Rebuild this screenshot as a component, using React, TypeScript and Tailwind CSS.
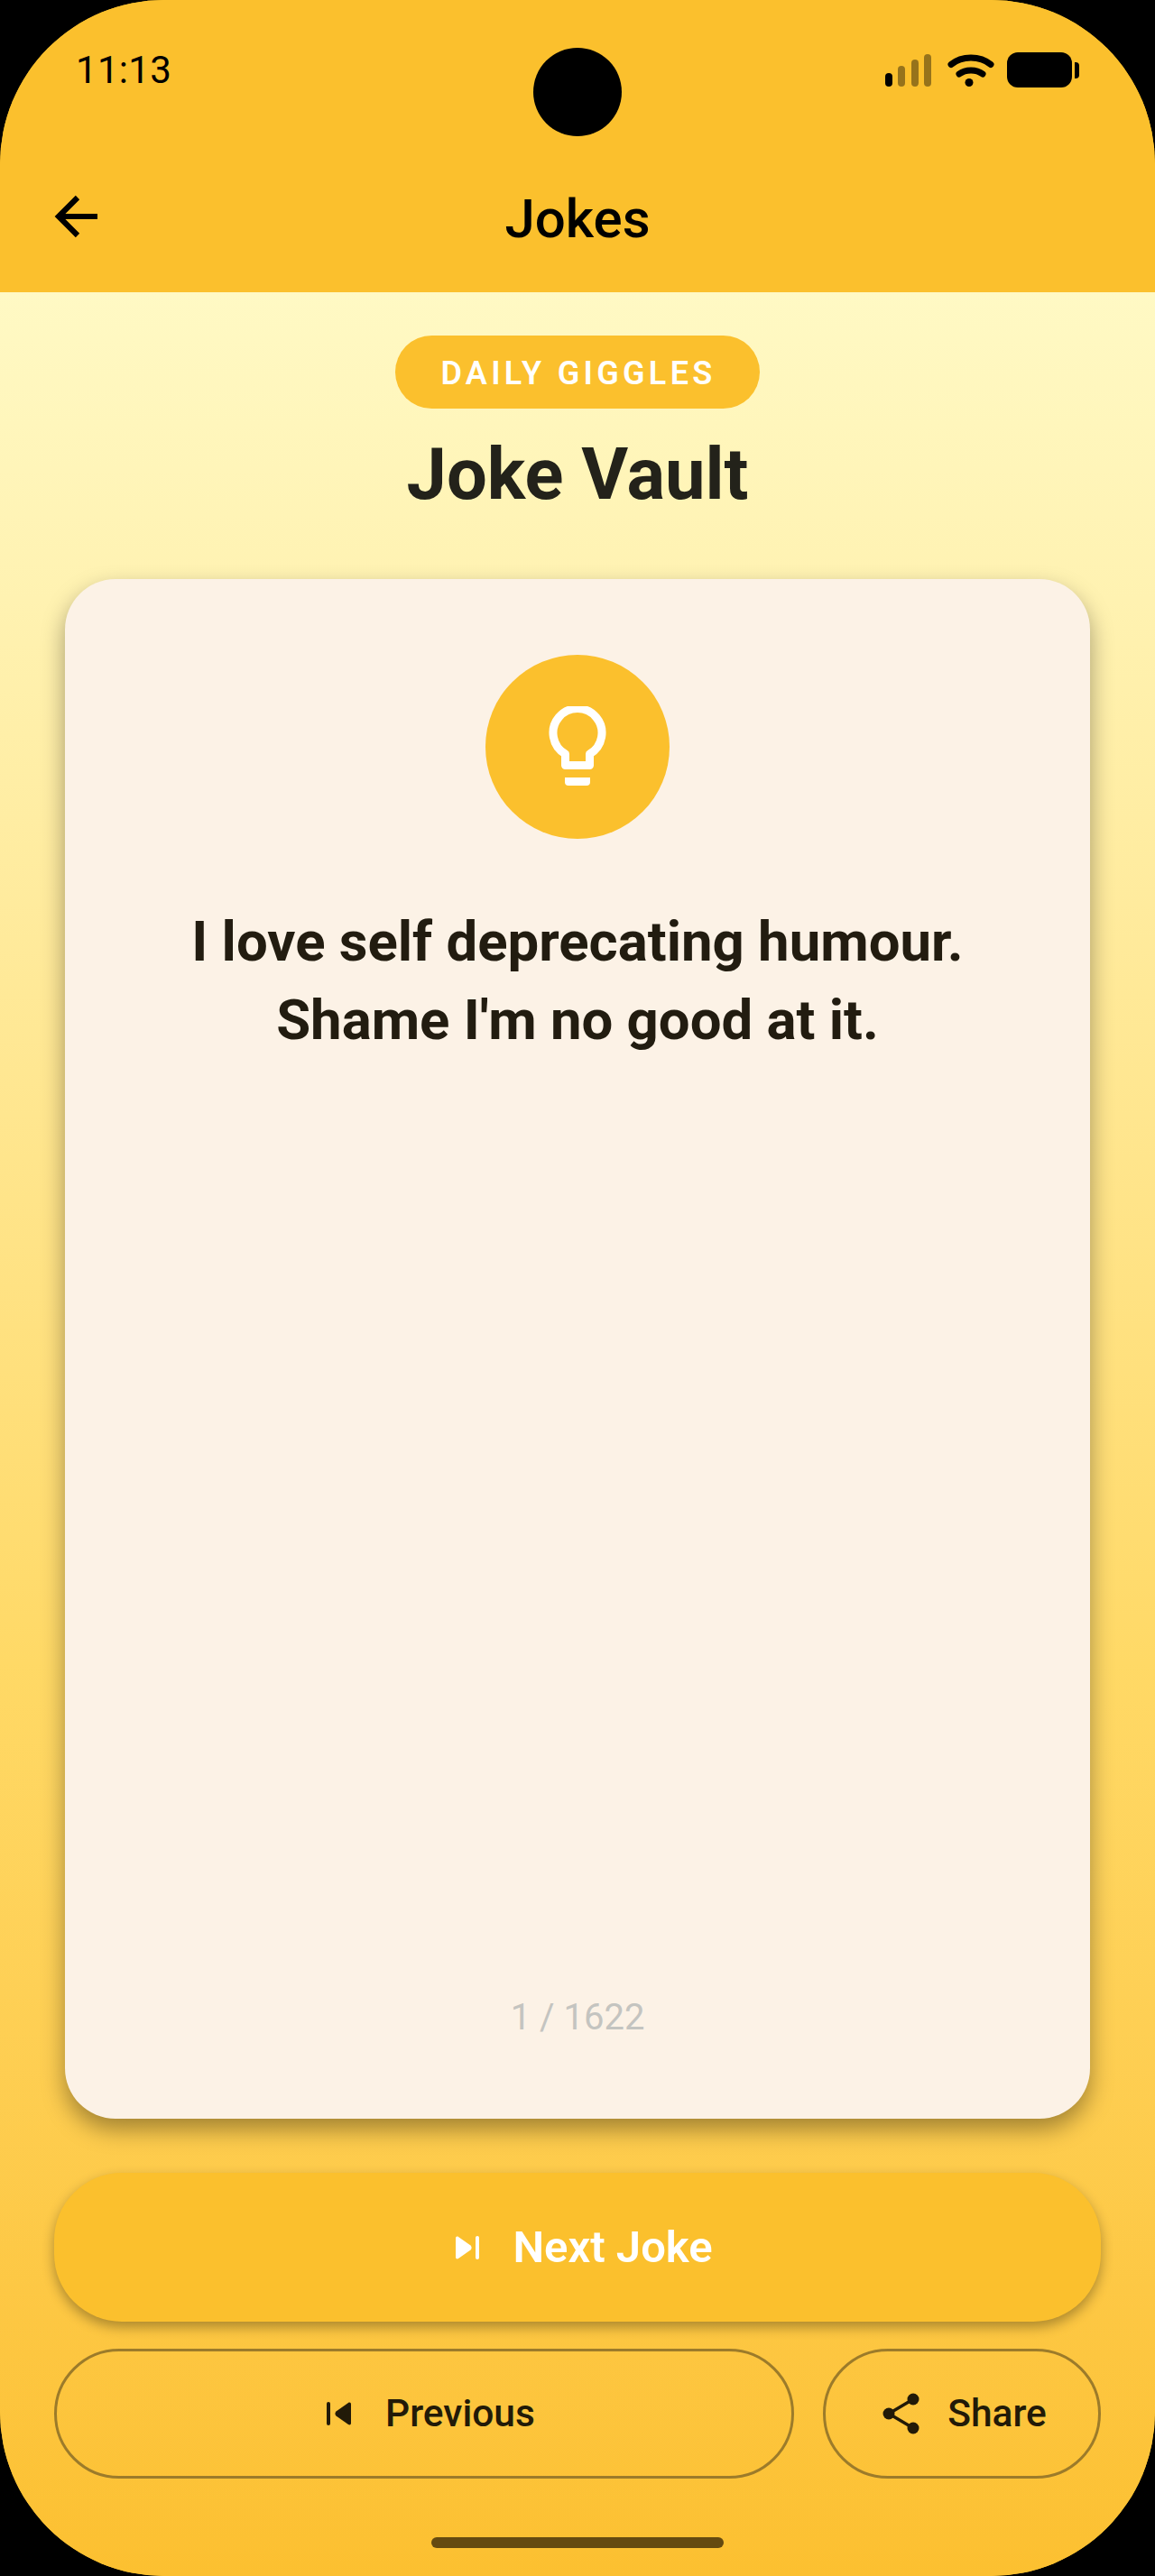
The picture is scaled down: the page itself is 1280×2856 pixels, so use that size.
export default function App() {
  return (
    <div className="w-full h-[2856px] bg-black font-['Roboto',sans-serif]">
      <div className="relative h-full rounded-[182px] overflow-hidden flex flex-col bg-[#FBC02D]">
        <header className="h-[324px] bg-[#FBC02D] shrink-0 flex flex-col text-black">
          <div className="h-[162px] flex justify-between items-start relative">
            <span className="ml-[84px] mt-[53px] text-[42px] leading-[50px] tracking-[0.3px]">11:13</span>
            <div className="absolute left-[591px] top-[53px] w-[98px] h-[98px] rounded-full bg-black" />
            <svg className="absolute left-[970px] top-[50px]" width="240" height="60" viewBox="0 0 240 60" fill="none">
              <rect x="11" y="31" width="8" height="15" rx="4" fill="#000" />
              <rect x="25" y="23" width="8" height="23" rx="4" fill="#000" opacity="0.4" />
              <rect x="40" y="16" width="8" height="30" rx="4" fill="#000" opacity="0.4" />
              <rect x="54" y="10" width="8" height="36" rx="4" fill="#000" opacity="0.4" />
              <path d="M84 21.500C96 11.500 116 11.500 128 21.500" stroke="#000" strokeWidth="7" strokeLinecap="round" />
              <path d="M93 32C100 26.500 112 26.500 119 32" stroke="#000" strokeWidth="7" strokeLinecap="round" />
              <circle cx="104" cy="41.500" r="4.500" fill="#000" />
              <rect x="146" y="8" width="72" height="39" rx="12" fill="#000" />
              <path d="M221 19h1a4 4 0 0 1 4 4v10a4 4 0 0 1-4 4h-1z" fill="#000" />
            </svg>
          </div>
          <div className="h-[162px] relative flex items-start justify-center">
            <svg className="absolute left-[58px] top-[52px]" width="52" height="52" viewBox="0 0 52 52" fill="none">
              <path d="M50 26H7M28 5 7 26l21 21" stroke="#000" strokeWidth="6.200" />
            </svg>
            <span className="mt-[47px] text-[60px] leading-[68px] font-medium">Jokes</span>
          </div>
        </header>

        <main className="flex-1 flex flex-col px-[60px] pt-[48px] pb-[108px] bg-gradient-to-b from-[#FFF9C4] via-[#FFD966] via-60% to-[#FCC030]">
          <div className="flex flex-col items-center">
            <span className="h-[81px] w-[404px] pt-[2px] pl-[2px] rounded-full bg-[#FBC02D] text-white text-[36px] font-semibold tracking-[4.300px] flex items-center justify-center">
              DAILY GIGGLES
            </span>
            <h1 className="mt-[27px] text-[79.500px] leading-[92px] font-bold text-[#23221a]">Joke Vault</h1>
          </div>

          <section className="mt-[70px] mx-[12px] flex-1 rounded-[56px] bg-[#FCF2E6] shadow-[0_12px_26px_rgba(0,0,0,0.36)] flex flex-col items-center pt-[84px] pb-[88px]">
            <div className="w-[204px] h-[204px] rounded-full bg-[#FBC02D] flex items-center justify-center">
              <svg width="80" height="90" viewBox="0 0 80 90" fill="none">
                <path d="M26.500 53A27 27 0 1 1 53.500 53V65.500H26.500Z" stroke="#fff" strokeWidth="9" strokeLinejoin="round" />
                <path d="M26 79h28v5a4 4 0 0 1-4 4H30a4 4 0 0 1-4-4z" fill="#fff" />
              </svg>
            </div>
            <p className="mt-[71px] text-center text-[61.700px] leading-[87px] font-bold text-[#221c10]">
              I love self deprecating humour.
              <br />
              Shame I'm no good at it.
            </p>
            <span className="mt-auto text-[40px] leading-[48px] text-[#c4c4c0]">1 / 1622</span>
          </section>

          <button className="mt-[60px] h-[165px] shrink-0 rounded-[75px] pl-[15px] bg-[#FBC02D] shadow-[0_6px_14px_rgba(0,0,0,0.32)] flex items-center justify-center gap-[37px] text-white text-[49px] font-semibold">
            <svg width="26" height="26" viewBox="0 0 26 26" fill="#fff">
              <path d="M0 2.500C0 .8 1.500 0 3 1L16.500 10.500C18 12 18 14 16.500 15.500L3 25C1.500 26 0 25.200 0 23.500Z" />
              <rect x="22" y="0" width="4" height="26" rx="2" />
            </svg>
            Next Joke
          </button>

          <div className="mt-[30px] h-[144px] shrink-0 flex gap-[32px] text-[#221a08] text-[42.500px] font-medium">
            <button className="flex-1 rounded-[72px] border-[3px] border-[#9C7B2A] pl-[15px] flex items-center justify-center gap-[38px]">
              <svg width="27" height="26" viewBox="0 0 27 26" fill="#221a08">
                <rect x="0" y="0" width="4" height="26" rx="2" />
                <path d="M27 2.500C27 .8 25.500 0 24 1L10.500 10.500C9 12 9 14 10.500 15.500L24 25C25.500 26 27 25.200 27 23.500Z" />
              </svg>
              Previous
            </button>
            <button className="w-[308px] rounded-[72px] border-[3px] border-[#9C7B2A] pl-[6px] flex items-center justify-center gap-[31px]">
              <svg width="41" height="46" viewBox="0 0 41 46" fill="none">
                <path d="M34 7 7 23l27 16" stroke="#221a08" strokeWidth="3.500" />
                <circle cx="34" cy="7" r="6.500" fill="#221a08" />
                <circle cx="7" cy="23" r="6.500" fill="#221a08" />
                <circle cx="34" cy="39" r="6.500" fill="#221a08" />
              </svg>
              Share
            </button>
          </div>
        </main>

        <div className="absolute left-[478px] top-[2813px] w-[324px] h-[12px] rounded-full bg-[#654A10]" />
      </div>
    </div>
  );
}
